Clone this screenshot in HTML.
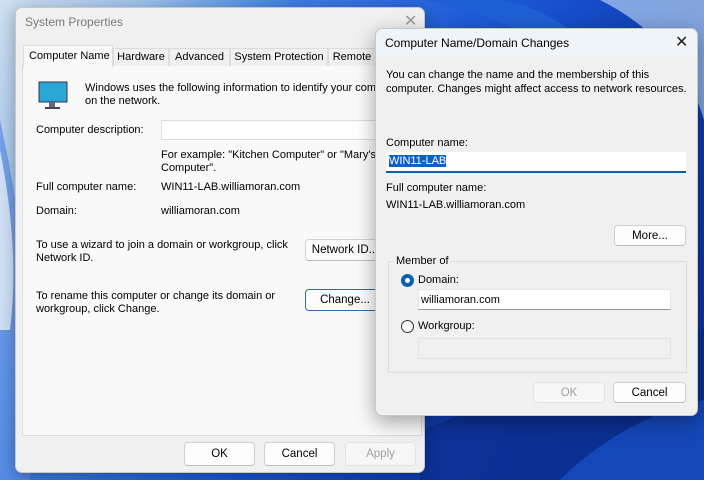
<!DOCTYPE html>
<html><head><meta charset="utf-8"><style>
*{box-sizing:border-box;margin:0;padding:0}
body{width:704px;height:480px;overflow:hidden;position:relative;font-family:"Liberation Sans",sans-serif;font-size:11px;color:#000;white-space:nowrap;
background:linear-gradient(120deg,#cfe0f2 0%,#9cc0ea 15%,#3d7fe0 30%,#1d5ad8 50%,#0f3fb8 70%,#0b2f94 100%);}
.a{position:absolute}
.btn{position:absolute;background:#fdfdfd;border:1px solid #d0d0d0;border-bottom-color:#bbb;border-radius:4px;text-align:center;font-size:11.5px}
.dis{color:#a0a0a0;background:#f6f6f6;border-color:#e3e3e3}
.tab{position:absolute;top:40px;height:18px;border:1px solid #dcdcdc;border-bottom:none;padding-top:2px;background:#f0f0f0;text-align:center}
</style></head><body>
<svg class="a" style="left:0;top:0" width="704" height="480">
<path d="M0 120 Q40 300 30 480 L0 480Z" fill="#5a8fe6" opacity=".7"/>
<path d="M0 150 Q20 250 10 330 L0 330Z" fill="#e8f1fb" opacity=".8"/>
<path d="M424 0 Q520 20 560 60 L600 60 Q560 10 500 0Z" fill="#1f5fd6"/>
<path d="M600 0 Q680 40 704 120 L704 0Z" fill="#9fbde8" opacity=".8"/>
<path d="M420 430 Q560 380 704 330 L704 480 L420 480Z" fill="#0b2d8c" opacity=".7"/>
<path d="M560 480 Q620 420 704 400 L704 480Z" fill="#1447b8"/>
</svg>
<div class="a" style="left:15px;top:7px;width:410px;height:466px;background:#f0f0f0;border:1px solid #c8c8c8;border-radius:7px;box-shadow:0 4px 16px rgba(0,0,0,.3)">
 <div class="a" style="left:9px;top:7px;color:#7a7a7a;font-size:12px">System Properties</div>
 <div class="a" style="left:388px;top:3px;color:#999;font-size:16px">✕</div>
 <div class="a" style="left:6px;top:57px;width:400px;height:371px;background:#f9f9f9;border:1px solid #dcdcdc"></div>
 <div class="a" style="left:7px;top:37px;width:90px;height:22px;background:#f9f9f9;border:1px solid #dcdcdc;border-bottom:none;padding:4px 0 0 5px">Computer Name</div>
 <div class="tab" style="left:97px;width:56px">Hardware</div>
 <div class="tab" style="left:153px;width:61px">Advanced</div>
 <div class="tab" style="left:214px;width:98px">System Protection</div>
 <div class="tab" style="left:312px;width:48px">Remote</div>
 <svg class="a" style="left:21px;top:72px" width="32" height="34"><rect x="2" y="2" width="28" height="20" fill="#2ba7d6" stroke="#335" stroke-width="1"/><rect x="12" y="22" width="6" height="5" fill="#667"/><rect x="8" y="27" width="15" height="2" fill="#445"/></svg>
 <div class="a" style="left:69px;top:74px;line-height:13px">Windows uses the following information to identify your computer<br>on the network.</div>
 <div class="a" style="left:20px;top:116px">Computer description:</div>
 <div class="a" style="left:145px;top:112px;width:240px;height:20px;background:#fff;border:1px solid #ddd"></div>
 <div class="a" style="left:145px;top:141px;line-height:13px">For example: "Kitchen Computer" or "Mary's<br>Computer".</div>
 <div class="a" style="left:20px;top:173px">Full computer name:</div>
 <div class="a" style="left:145px;top:173px">WIN11-LAB.williamoran.com</div>
 <div class="a" style="left:20px;top:197px">Domain:</div>
 <div class="a" style="left:145px;top:197px">williamoran.com</div>
 <div class="a" style="left:20px;top:231px;line-height:13px">To use a wizard to join a domain or workgroup, click<br>Network ID.</div>
 <div class="btn" style="left:289px;top:231px;width:80px;height:22px;padding-top:4px">Network ID...</div>
 <div class="a" style="left:20px;top:282px;line-height:13px">To rename this computer or change its domain or<br>workgroup, click Change.</div>
 <div class="btn" style="left:289px;top:281px;width:80px;height:22px;padding-top:4px;border:1px solid #2b6cb0">Change...</div>
 <div class="btn" style="left:168px;top:434px;width:71px;height:24px;padding-top:5px">OK</div>
 <div class="btn" style="left:248px;top:434px;width:71px;height:24px;padding-top:5px">Cancel</div>
 <div class="btn dis" style="left:329px;top:434px;width:71px;height:24px;padding-top:5px">Apply</div>
</div>
<div class="a" style="left:375px;top:28px;width:323px;height:388px;background:#f0f0f0;border:1px solid #c8c8c8;border-radius:7px;box-shadow:0 6px 20px rgba(0,0,0,.35)">
 <div class="a" style="left:0;top:0;width:321px;height:28px;background:#eff4f9;border-radius:7px 7px 0 0"></div>
 <div class="a" style="left:9px;top:7px;font-size:12px">Computer Name/Domain Changes</div>
 <div class="a" style="left:299px;top:3px;font-size:16px;color:#222">✕</div>
 <div class="a" style="left:10px;top:40px;line-height:13.5px">You can change the name and the membership of this<br>computer. Changes might affect access to network resources.</div>
 <div class="a" style="left:10px;top:108px">Computer name:</div>
 <div class="a" style="left:10px;top:123px;width:300px;height:21px;background:#fff;border-bottom:2px solid #0a5fb0;padding:3px 0 0 3px"><span style="background:#0a62c4;color:#fff">WIN11-LAB</span></div>
 <div class="a" style="left:10px;top:153px">Full computer name:</div>
 <div class="a" style="left:10px;top:170px">WIN11-LAB.williamoran.com</div>
 <div class="btn" style="left:238px;top:196px;width:72px;height:21px;padding-top:4px">More...</div>
 <div class="a" style="left:12px;top:232px;width:299px;height:112px;border:1px solid #dcdcdc"></div>
 <div class="a" style="left:18px;top:226px;background:#f0f0f0;padding:0 2px">Member of</div>
 <div class="a" style="left:25px;top:245px;width:13px;height:13px;border-radius:50%;background:#0a5fb0"><div class="a" style="left:4px;top:4px;width:5px;height:5px;border-radius:50%;background:#fff"></div></div>
 <div class="a" style="left:42px;top:245px">Domain:</div>
 <div class="a" style="left:42px;top:260px;width:253px;height:21px;background:#fff;border:1px solid #e5e5e5;border-bottom-color:#999;padding:4px 0 0 2px">williamoran.com</div>
 <div class="a" style="left:25px;top:291px;width:13px;height:13px;border-radius:50%;border:1px solid #333;background:#f7f7f7"></div>
 <div class="a" style="left:42px;top:291px">Workgroup:</div>
 <div class="a" style="left:42px;top:309px;width:253px;height:21px;border:1px solid #e2e2e2"></div>
 <div class="btn dis" style="left:157px;top:353px;width:72px;height:21px;padding-top:4px">OK</div>
 <div class="btn" style="left:237px;top:353px;width:73px;height:21px;padding-top:4px">Cancel</div>
</div>
</body></html>
